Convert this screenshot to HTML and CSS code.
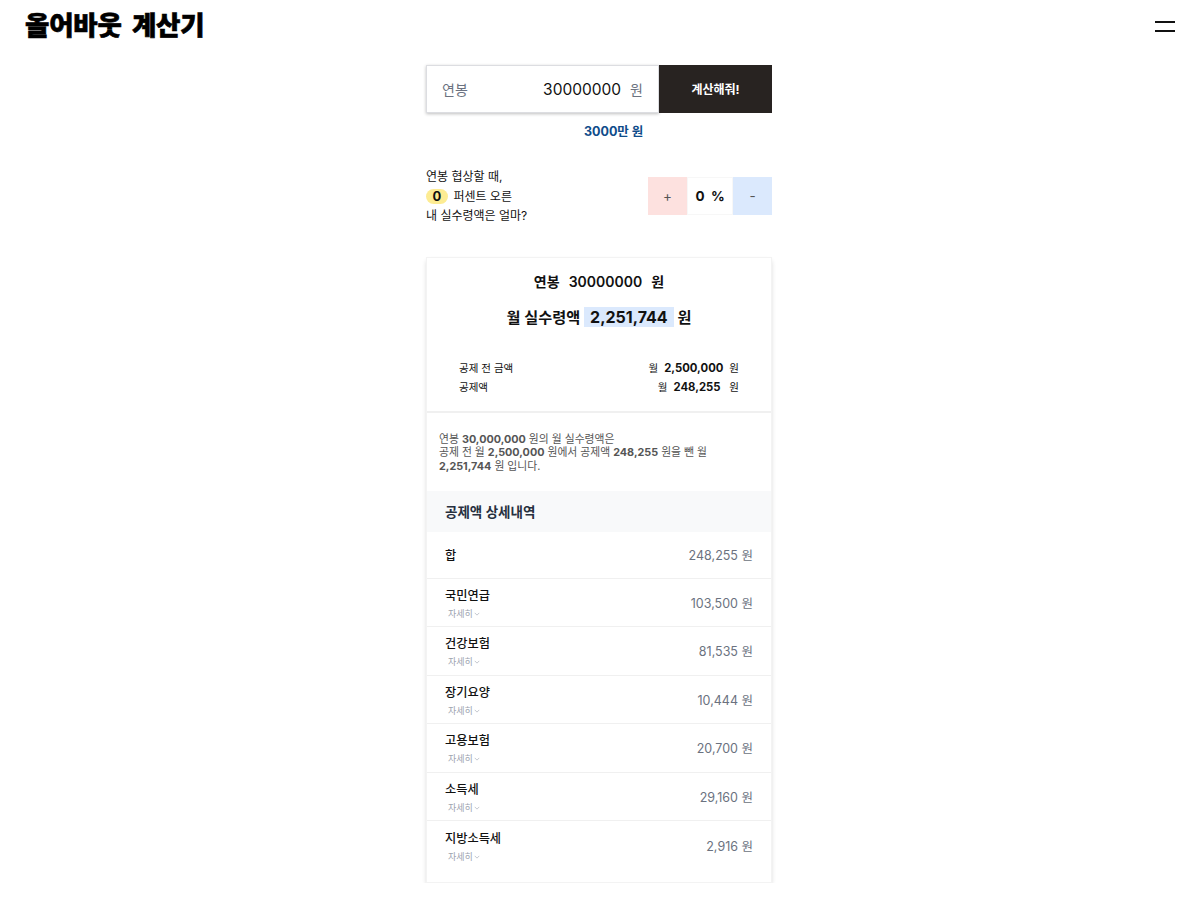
FILE: index.html
```html
<!DOCTYPE html>
<html lang="ko">
  <head>
    <meta charset="UTF-8" />
    <meta name="viewport" content="width=device-width, initial-scale=1.0" />
    <title>올어바웃 계산기</title>
    <link rel="stylesheet" href="styles.css">
  </head>
  <body>
    <header class="header">
      <div class="logo">올어바웃 계산기</div>
      <div class="menu-btn"><span></span><span></span></div>
    </header>

    <main class="content">
      <!-- Salary input -->
      <div class="salary-form">
        <div class="salary-input">
          <span class="salary-label">연봉</span>
          <span class="salary-value">30000000</span>
          <span class="salary-unit">원</span>
        </div>
        <div class="salary-submit">계산해줘!</div>
      </div>
      <div class="salary-hint">3000만 원</div>

      <!-- Raise percent -->
      <div class="raise">
        <div class="raise-text">
          <div>연봉 협상할 때,</div>
          <div><span class="raise-badge">0</span> 퍼센트 오른</div>
          <div>내 실수령액은 얼마?</div>
        </div>
        <div class="raise-stepper">
          <div class="step step-plus">+</div>
          <div class="step-value">0 &nbsp;%</div>
          <div class="step step-minus">-</div>
        </div>
      </div>

      <!-- Result card -->
      <section class="card">
        <div class="summary">
          <div class="summary-year">연봉 &nbsp;30000000 &nbsp;원</div>
          <div class="summary-month">월 실수령액 <span class="summary-mark">2,251,744</span> 원</div>
          <div class="summary-row">
            <span>공제 전 금액</span>
            <span>월 &nbsp;<b>2,500,000</b> &nbsp;원</span>
          </div>
          <div class="summary-row">
            <span>공제액</span>
            <span>월 &nbsp;<b>248,255</b> &nbsp;&nbsp;원</span>
          </div>
        </div>

        <div class="note">
          연봉 <b>30,000,000</b> 원의 월 실수령액은<br>
          공제 전 월 <b>2,500,000</b> 원에서 공제액 <b>248,255</b> 원을 뺀 월<br>
          <b>2,251,744</b> 원 입니다.
        </div>

        <div class="detail-title">공제액 상세내역</div>

        <div class="detail-row detail-total">
          <div class="detail-name">합</div>
          <div class="detail-amount">248,255 원</div>
        </div>
        <div class="detail-row">
          <div>
            <div class="detail-name">국민연급</div>
            <div class="detail-more">자세히<svg viewBox="0 0 8 5"><path d="M1 1l3 3 3-3" /></svg></div>
          </div>
          <div class="detail-amount">103,500 원</div>
        </div>
        <div class="detail-row">
          <div>
            <div class="detail-name">건강보험</div>
            <div class="detail-more">자세히<svg viewBox="0 0 8 5"><path d="M1 1l3 3 3-3" /></svg></div>
          </div>
          <div class="detail-amount">81,535 원</div>
        </div>
        <div class="detail-row">
          <div>
            <div class="detail-name">장기요양</div>
            <div class="detail-more">자세히<svg viewBox="0 0 8 5"><path d="M1 1l3 3 3-3" /></svg></div>
          </div>
          <div class="detail-amount">10,444 원</div>
        </div>
        <div class="detail-row">
          <div>
            <div class="detail-name">고용보험</div>
            <div class="detail-more">자세히<svg viewBox="0 0 8 5"><path d="M1 1l3 3 3-3" /></svg></div>
          </div>
          <div class="detail-amount">20,700 원</div>
        </div>
        <div class="detail-row">
          <div>
            <div class="detail-name">소득세</div>
            <div class="detail-more">자세히<svg viewBox="0 0 8 5"><path d="M1 1l3 3 3-3" /></svg></div>
          </div>
          <div class="detail-amount">29,160 원</div>
        </div>
        <div class="detail-row">
          <div>
            <div class="detail-name">지방소득세</div>
            <div class="detail-more">자세히<svg viewBox="0 0 8 5"><path d="M1 1l3 3 3-3" /></svg></div>
          </div>
          <div class="detail-amount">2,916 원</div>
        </div>
      </section>
    </main>
  </body>
</html>
```

FILE: styles.css
```css
* {
  box-sizing: border-box;
}

body {
  margin: 0;
  background: #fff;
  color: #111;
  font-family: Inter, "Noto Sans CJK KR", sans-serif;
}

.header {
  display: flex;
  justify-content: space-between;
  align-items: center;
  height: 50px;
  padding: 0 25px 0 25px;
}

.logo {
  margin-top: -3px;
  font-family: "Noto Sans CJK KR", sans-serif;
  font-size: 26.5px;
  font-weight: 900;
  line-height: 50px;
  letter-spacing: -0.2px;
  word-spacing: 3px;
  color: #000;
  -webkit-text-stroke: 0.6px #000;
}

.menu-btn {
  display: flex;
  flex-direction: column;
  gap: 7px;
  width: 20px;
  margin-top: 3px;
}

.menu-btn span {
  display: block;
  height: 2px;
  background: #111;
}

.content {
  width: 346px;
  margin: 15px 0 0 calc(50% - 174px);
}

.salary-form {
  display: flex;
  height: 48px;
}

.salary-input {
  display: flex;
  align-items: center;
  width: 233px;
  padding: 0 15px;
  border: 1px solid #dcdde1;
  box-shadow: 0 1px 3px rgba(0, 0, 0, 0.25);
  font-size: 14px;
  color: #6b7280;
}

.salary-label {
  flex: 1;
}

.salary-value {
  margin-right: 9px;
  font-size: 15.5px;
  color: #111;
}

.salary-submit {
  display: flex;
  align-items: center;
  justify-content: center;
  width: 113px;
  padding-bottom: 2px;
  background: #282321;
  color: #fff;
  font-size: 12px;
  font-weight: 700;
}

.salary-hint {
  margin-top: 8px;
  margin-left: 158px;
  font-size: 12.5px;
  font-weight: 700;
  color: #0f4c8a;
}

.raise {
  display: flex;
  justify-content: space-between;
  align-items: center;
  margin-top: 27px;
}

.raise-text {
  font-size: 12px;
  line-height: 19.5px;
}

.raise-badge {
  display: inline-block;
  width: 22px;
  height: 15px;
  margin-right: 2px;
  border-radius: 8px;
  background: #fdec93;
  font-size: 13px;
  font-weight: 700;
  line-height: 15px;
  text-align: center;
}

.raise-stepper {
  display: flex;
  height: 38px;
  font-size: 13.5px;
}

.step,
.step-value {
  display: flex;
  align-items: center;
  justify-content: center;
}

.step {
  color: #555;
}

.step-plus {
  width: 39px;
  background: #fde1df;
}

.step-value {
  width: 46px;
  font-weight: 700;
  box-shadow: inset 0 0 0 1px #f7f7f7;
}

.step-minus {
  width: 39px;
  background: #dbe9fd;
}

.card {
  margin-top: 31px;
  border: 1px solid #f3f3f3;
  box-shadow: 0 3px 5px -1px rgba(0, 0, 0, 0.2);
  padding-bottom: 12px;
}

.summary {
  padding: 13px 32px 13px;
  border-bottom: 2px solid #f0f0f0;
}

.summary-year {
  font-size: 14px;
  font-weight: 600;
  word-spacing: 1px;
  text-align: center;
}

.summary-month {
  margin-top: 14px;
  margin-bottom: 32px;
  font-size: 15.2px;
  font-weight: 600;
  text-align: center;
}

.summary-mark {
  padding: 0 6px;
  background: #dbe9fd;
  font-size: 16px;
  font-weight: 700;
}

.summary-row {
  display: flex;
  justify-content: space-between;
  font-size: 10.5px;
  line-height: 19.5px;
}

.summary-row b {
  font-size: 11.3px;
  font-weight: 700;
}

.note {
  padding: 20px 12px 18px;
  font-size: 10.8px;
  line-height: 13.5px;
  color: #555;
}

.detail-title {
  padding: 0 18px;
  height: 41px;
  line-height: 43px;
  background: #f8f9fa;
  font-size: 13.5px;
  font-weight: 600;
  color: #27303f;
}

.detail-row {
  display: flex;
  justify-content: space-between;
  align-items: center;
  height: 48.5px;
  padding: 2px 18px 0;
  border-bottom: 1px solid #f0f0f0;
}

.detail-row:last-child {
  border-bottom: 0;
}

.detail-total {
  height: 46.5px;
}

.detail-name {
  font-size: 12.2px;
  font-weight: 500;
  line-height: 17px;
}

.detail-more {
  display: flex;
  align-items: center;
  margin-top: 4px;
  margin-left: 3px;
  font-size: 9px;
  line-height: 12px;
  color: #9ca3af;
}

.detail-more svg {
  width: 6px;
  height: 4px;
  margin-left: 1px;
  fill: none;
  stroke: #9ca3af;
  stroke-width: 0.8;
}

.detail-amount {
  margin-bottom: 2px;
  font-size: 12.5px;
  color: #6b7280;
}
```
